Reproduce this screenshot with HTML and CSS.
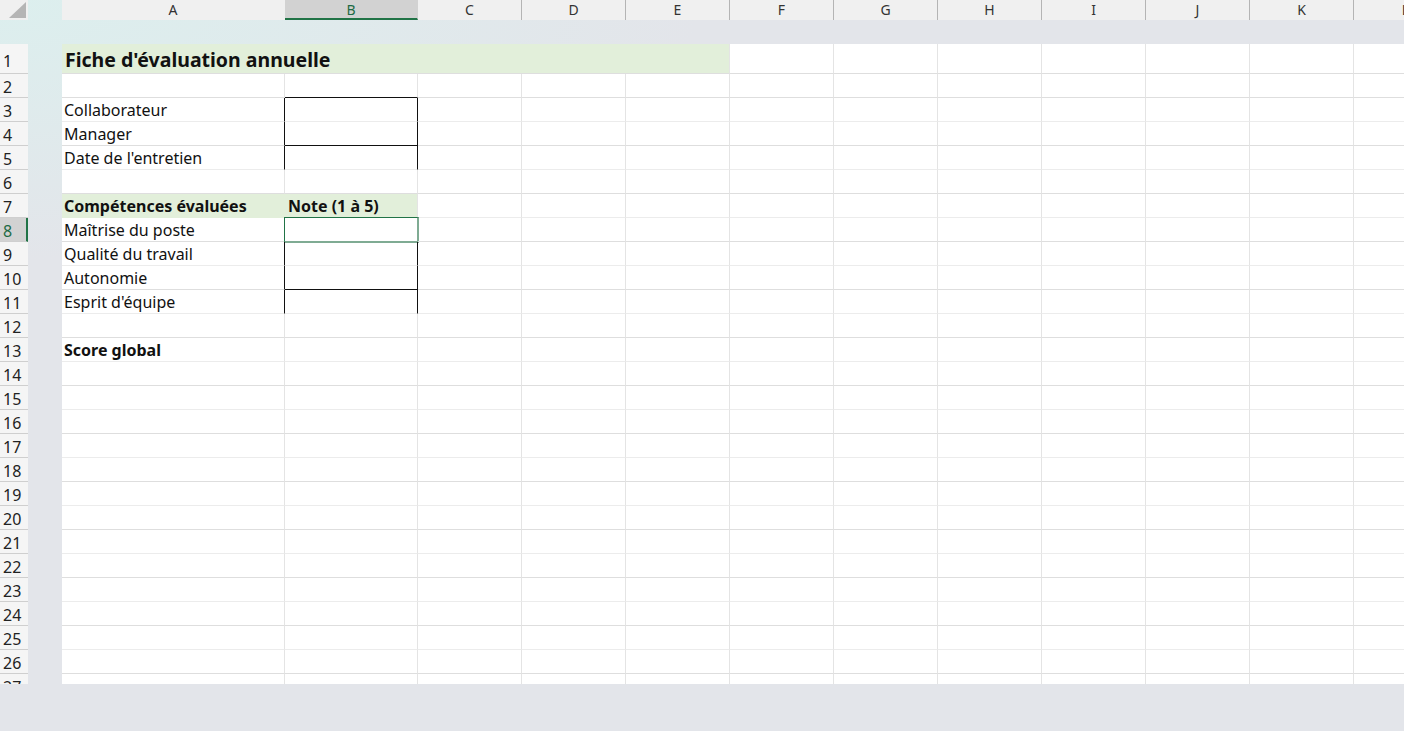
FILE: index.html
```html
<!DOCTYPE html>
<html lang="fr">
<head>
<meta charset="utf-8">
<title>Fiche d'évaluation annuelle</title>
<link rel="stylesheet" href="styles.css">
</head>
<body>
<div class="app">
  <div class="corner">
    <svg width="28" height="20" viewBox="0 0 28 20"><polygon points="26,2 26,18 9,18" fill="#b5b5b5"/></svg>
  </div>
  <div class="colhead">
    <div class="ch">A</div><div class="ch sel">B</div><div class="ch">C</div><div class="ch">D</div><div class="ch">E</div><div class="ch">F</div><div class="ch">G</div><div class="ch">H</div><div class="ch">I</div><div class="ch">J</div><div class="ch">K</div><div class="ch">L</div>
  </div>
  <div class="rowhead">
    <div class="rh rh1">1</div><div class="rh">2</div><div class="rh">3</div><div class="rh">4</div><div class="rh">5</div><div class="rh">6</div><div class="rh">7</div><div class="rh sel">8</div><div class="rh">9</div><div class="rh">10</div><div class="rh">11</div><div class="rh">12</div><div class="rh">13</div><div class="rh">14</div><div class="rh">15</div><div class="rh">16</div><div class="rh">17</div><div class="rh">18</div><div class="rh">19</div><div class="rh">20</div><div class="rh">21</div><div class="rh">22</div><div class="rh">23</div><div class="rh">24</div><div class="rh">25</div><div class="rh">26</div><div class="rh">27</div>
  </div>
  <div class="sheet">
    <div class="r r1"><div class="c title fill">Fiche d'évaluation annuelle</div><div class="c"></div><div class="c"></div><div class="c"></div><div class="c"></div><div class="c"></div><div class="c"></div><div class="c"></div></div>
    <div class="r"><div class="c"></div><div class="c bb"></div><div class="c"></div><div class="c"></div><div class="c"></div><div class="c"></div><div class="c"></div><div class="c"></div><div class="c"></div><div class="c"></div><div class="c"></div><div class="c"></div></div>
    <div class="r"><div class="c br">Collaborateur</div><div class="c br"></div><div class="c"></div><div class="c"></div><div class="c"></div><div class="c"></div><div class="c"></div><div class="c"></div><div class="c"></div><div class="c"></div><div class="c"></div><div class="c"></div></div>
    <div class="r"><div class="c br">Manager</div><div class="c br bb"></div><div class="c"></div><div class="c"></div><div class="c"></div><div class="c"></div><div class="c"></div><div class="c"></div><div class="c"></div><div class="c"></div><div class="c"></div><div class="c"></div></div>
    <div class="r"><div class="c br">Date de l'entretien</div><div class="c br"></div><div class="c"></div><div class="c"></div><div class="c"></div><div class="c"></div><div class="c"></div><div class="c"></div><div class="c"></div><div class="c"></div><div class="c"></div><div class="c"></div></div>
    <div class="r"><div class="c"></div><div class="c"></div><div class="c"></div><div class="c"></div><div class="c"></div><div class="c"></div><div class="c"></div><div class="c"></div><div class="c"></div><div class="c"></div><div class="c"></div><div class="c"></div></div>
    <div class="r"><div class="c b fill">Compétences évaluées</div><div class="c b fill pad">Note (1 à 5)</div><div class="c"></div><div class="c"></div><div class="c"></div><div class="c"></div><div class="c"></div><div class="c"></div><div class="c"></div><div class="c"></div><div class="c"></div><div class="c"></div></div>
    <div class="r"><div class="c br">Maîtrise du poste</div><div class="c br bb active"></div><div class="c"></div><div class="c"></div><div class="c"></div><div class="c"></div><div class="c"></div><div class="c"></div><div class="c"></div><div class="c"></div><div class="c"></div><div class="c"></div></div>
    <div class="r"><div class="c br">Qualité du travail</div><div class="c br"></div><div class="c"></div><div class="c"></div><div class="c"></div><div class="c"></div><div class="c"></div><div class="c"></div><div class="c"></div><div class="c"></div><div class="c"></div><div class="c"></div></div>
    <div class="r"><div class="c br">Autonomie</div><div class="c br bb"></div><div class="c"></div><div class="c"></div><div class="c"></div><div class="c"></div><div class="c"></div><div class="c"></div><div class="c"></div><div class="c"></div><div class="c"></div><div class="c"></div></div>
    <div class="r"><div class="c br">Esprit d'équipe</div><div class="c br"></div><div class="c"></div><div class="c"></div><div class="c"></div><div class="c"></div><div class="c"></div><div class="c"></div><div class="c"></div><div class="c"></div><div class="c"></div><div class="c"></div></div>
    <div class="r"><div class="c"></div><div class="c"></div><div class="c"></div><div class="c"></div><div class="c"></div><div class="c"></div><div class="c"></div><div class="c"></div><div class="c"></div><div class="c"></div><div class="c"></div><div class="c"></div></div>
    <div class="r"><div class="c b">Score global</div><div class="c"></div><div class="c"></div><div class="c"></div><div class="c"></div><div class="c"></div><div class="c"></div><div class="c"></div><div class="c"></div><div class="c"></div><div class="c"></div><div class="c"></div></div>
    <div class="r"><div class="c"></div><div class="c"></div><div class="c"></div><div class="c"></div><div class="c"></div><div class="c"></div><div class="c"></div><div class="c"></div><div class="c"></div><div class="c"></div><div class="c"></div><div class="c"></div></div>
    <div class="r"><div class="c"></div><div class="c"></div><div class="c"></div><div class="c"></div><div class="c"></div><div class="c"></div><div class="c"></div><div class="c"></div><div class="c"></div><div class="c"></div><div class="c"></div><div class="c"></div></div>
    <div class="r"><div class="c"></div><div class="c"></div><div class="c"></div><div class="c"></div><div class="c"></div><div class="c"></div><div class="c"></div><div class="c"></div><div class="c"></div><div class="c"></div><div class="c"></div><div class="c"></div></div>
    <div class="r"><div class="c"></div><div class="c"></div><div class="c"></div><div class="c"></div><div class="c"></div><div class="c"></div><div class="c"></div><div class="c"></div><div class="c"></div><div class="c"></div><div class="c"></div><div class="c"></div></div>
    <div class="r"><div class="c"></div><div class="c"></div><div class="c"></div><div class="c"></div><div class="c"></div><div class="c"></div><div class="c"></div><div class="c"></div><div class="c"></div><div class="c"></div><div class="c"></div><div class="c"></div></div>
    <div class="r"><div class="c"></div><div class="c"></div><div class="c"></div><div class="c"></div><div class="c"></div><div class="c"></div><div class="c"></div><div class="c"></div><div class="c"></div><div class="c"></div><div class="c"></div><div class="c"></div></div>
    <div class="r"><div class="c"></div><div class="c"></div><div class="c"></div><div class="c"></div><div class="c"></div><div class="c"></div><div class="c"></div><div class="c"></div><div class="c"></div><div class="c"></div><div class="c"></div><div class="c"></div></div>
    <div class="r"><div class="c"></div><div class="c"></div><div class="c"></div><div class="c"></div><div class="c"></div><div class="c"></div><div class="c"></div><div class="c"></div><div class="c"></div><div class="c"></div><div class="c"></div><div class="c"></div></div>
    <div class="r"><div class="c"></div><div class="c"></div><div class="c"></div><div class="c"></div><div class="c"></div><div class="c"></div><div class="c"></div><div class="c"></div><div class="c"></div><div class="c"></div><div class="c"></div><div class="c"></div></div>
    <div class="r"><div class="c"></div><div class="c"></div><div class="c"></div><div class="c"></div><div class="c"></div><div class="c"></div><div class="c"></div><div class="c"></div><div class="c"></div><div class="c"></div><div class="c"></div><div class="c"></div></div>
    <div class="r"><div class="c"></div><div class="c"></div><div class="c"></div><div class="c"></div><div class="c"></div><div class="c"></div><div class="c"></div><div class="c"></div><div class="c"></div><div class="c"></div><div class="c"></div><div class="c"></div></div>
    <div class="r"><div class="c"></div><div class="c"></div><div class="c"></div><div class="c"></div><div class="c"></div><div class="c"></div><div class="c"></div><div class="c"></div><div class="c"></div><div class="c"></div><div class="c"></div><div class="c"></div></div>
    <div class="r"><div class="c"></div><div class="c"></div><div class="c"></div><div class="c"></div><div class="c"></div><div class="c"></div><div class="c"></div><div class="c"></div><div class="c"></div><div class="c"></div><div class="c"></div><div class="c"></div></div>
    <div class="r"><div class="c"></div><div class="c"></div><div class="c"></div><div class="c"></div><div class="c"></div><div class="c"></div><div class="c"></div><div class="c"></div><div class="c"></div><div class="c"></div><div class="c"></div><div class="c"></div></div>
  </div>
</div>
</body>
</html>
```

FILE: styles.css
```css
* { box-sizing: border-box; }
html, body { margin: 0; padding: 0; }
body {
  width: 1404px;
  height: 731px;
  overflow: hidden;
  background: radial-gradient(700px 260px at 0 0, #dcefee 0%, #e3e5ea 100%);
  font-family: "Noto Sans", "Open Sans", sans-serif;
  color: #111;
}
.app {
  display: grid;
  grid-template-columns: 28px 34px 1342px;
  grid-template-rows: 20px 24px 640px;
}
.corner {
  grid-column: 1;
  grid-row: 1;
  background: #f0f0f0;
}
.corner svg { display: block; }
.colhead {
  grid-column: 3;
  grid-row: 1;
  display: grid;
  grid-template-columns: 223px 133px repeat(10, 104px);
  background: #f0f0f0;
  overflow: hidden;
}
.ch {
  height: 20px;
  border-right: 1px solid #b4b4b4;
  font-size: 14px;
  line-height: 20px;
  text-align: center;
  color: #333;
}
.ch:first-child { border-right-color: #f0f0f0; }
.ch.sel {
  background: #d2d2d2;
  color: #1e6b45;
  border-bottom: 2px solid #217346;
  line-height: 19px;
  border-right-color: #d2d2d2;
}
.rowhead {
  grid-column: 1;
  grid-row: 3;
  background: #f5f5f5;
  overflow: hidden;
}
.rh {
  height: 24px;
  border-bottom: 1px solid #cfcfcf;
  font-size: 16px;
  line-height: 24px;
  padding: 1px 0 0 3px;
  color: #222;
}
.rh1 { height: 30px; line-height: 32px; }
.rh.sel {
  background: #d2d2d2;
  color: #1e6b45;
  border-right: 2px solid #217346;
}
.sheet {
  grid-column: 3;
  grid-row: 3;
  background: #fff;
  overflow: hidden;
}
.r {
  display: grid;
  grid-template-columns: 223px 133px repeat(10, 104px);
  height: 24px;
}
.r1 {
  height: 30px;
  grid-template-columns: 668px repeat(7, 104px);
}
.c {
  border-right: 1px solid #e4e4e4;
  border-bottom: 1px solid #ececec;
  font-size: 16px;
  line-height: 20px;
  padding: 2px 0 0 2px;
  white-space: nowrap;
  position: relative;
}
.r:nth-child(even) .c, .r1 .c { border-bottom-color: #dedede; }
.r .c.fill {
  background: #e2efda;
  border-right-color: #e2efda;
  border-bottom-color: #e2efda;
}
.r1 .c.title {
  font-size: 19.5px;
  font-weight: 700;
  padding: 2px 0 0 3px;
  line-height: 27px;
  border-right-color: #e4e4e4;
  border-bottom-color: #dedede;
}
.b { font-weight: 700; }
.r .c.pad { padding-left: 3px; border-right-color: #e4e4e4; }
.r .c.br { border-right-color: #111; }
.r .c.bb { border-bottom-color: #111; }
.active::after {
  content: "";
  position: absolute;
  top: -1px;
  left: -1px;
  right: -2px;
  bottom: -2px;
  border-top: 1px solid #217346;
  border-left: 1px solid #217346;
  border-right: 2px solid #7fab93;
  border-bottom: 2px solid #7fab93;
}
```
